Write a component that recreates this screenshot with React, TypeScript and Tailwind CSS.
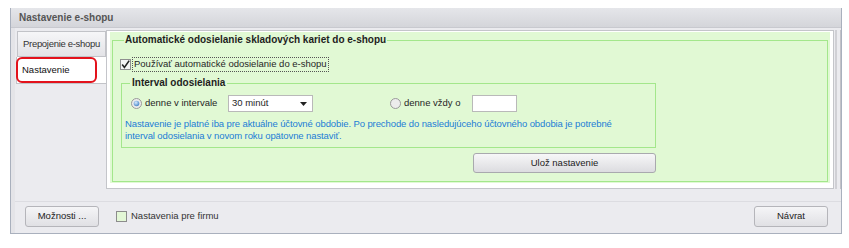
import React from 'react';

const CheckedBox: React.FC = () => (
  <svg width="11" height="11" viewBox="0 0 11 11" className="shrink-0">
    <rect x="0.5" y="0.5" width="10" height="10" fill="#f4f4f4" stroke="#8e8f8f" />
    <path d="M2.2 5.6 L4.4 8.4 L9.2 1.6" fill="none" stroke="#222" strokeWidth="1.6" />
  </svg>
);

const Radio: React.FC<{ checked?: boolean }> = ({ checked }) => (
  <svg width="11" height="11" viewBox="0 0 11 11" className="shrink-0">
    <defs>
      <radialGradient id="rb" cx="0.4" cy="0.35" r="0.7">
        <stop offset="0" stopColor="#d8ecff" />
        <stop offset="1" stopColor="#3f7fc4" />
      </radialGradient>
    </defs>
    <circle cx="5.5" cy="5.5" r="5" fill="#ececec" stroke="#9a9a9a" />
    {checked && <circle cx="5.5" cy="5.5" r="2.8" fill="url(#rb)" />}
  </svg>
);

const App: React.FC = () => {
  return (
    <div
      className="w-[849px] h-[248px] bg-white pt-[8px] pl-[10px] text-[9.5px] text-[#262626]"
      style={{ fontFamily: '"Liberation Sans", Arial, sans-serif' }}
    >
      <div className="w-[832px] h-[226px] flex flex-col bg-[#ebebef] border-l border-r border-b border-[#a9b0bd]">
        <div className="h-[20px] shrink-0 flex items-center pl-[8px] bg-gradient-to-b from-[#e5e6ea] to-[#d4d5da] border-b border-[#c8c9cf]">
          <span className="font-bold text-[10px] text-[#555]">Nastavenie e-shopu</span>
        </div>

        <div className="flex pt-[2px] border-l-[4px] border-[#e4e4e8]">
          <div className="relative w-[90px] ml-[1px] pt-[1px] flex flex-col">
            <div className="ml-[1px] h-[26px] flex items-center pl-[5px] border border-[#c2c3c8] bg-gradient-to-b from-[#f6f6f8] to-[#e3e3e7] text-[#333] whitespace-nowrap tracking-[-0.3px]">
              Prepojenie e-shopu
            </div>
            <div className="h-[27px] flex items-center pl-[5px] bg-white border-l border-b border-[#c2c3c8] text-[#111]">
              Nastavenie
            </div>
            <div className="absolute left-0 top-[27px] w-[81px] h-[26px] border-2 border-[#e3121c] rounded-[6px]" />
          </div>

          <div className="w-[728px] h-[159px] bg-white border border-[#c4c5ca] pt-[1px] px-[3px] pb-[5px]">
            <div className="h-full bg-[#e1f9d4] px-[2px] pt-[2px] pb-[1px]">
              <fieldset className="h-full border border-[#a3e78b] pl-[7px]">
                <legend className="ml-[4px] px-[1px] font-bold text-[10px] leading-[12px] text-[#1e1e1e]">
                  Automatické odosielanie skladových kariet do e-shopu
                </legend>

                <div className="mt-[11px] h-[15px] flex items-center">
                  <CheckedBox />
                  <span className="ml-[1px] h-[15px] flex items-center px-[1px] border border-dotted border-[#555]">
                    Používať automatické odosielanie do e-shopu
                  </span>
                </div>

                <fieldset className="mt-[5px] ml-[1px] w-[535px] border border-[#a3e78b] pb-[5px]">
                  <legend className="ml-[8px] px-[2px] font-bold text-[10px] leading-[12px] text-[#1e1e1e]">
                    Interval odosielania
                  </legend>
                  <div className="mt-[6px] h-[17px] flex items-center pl-[9px]">
                    <Radio checked />
                    <span className="ml-[3px] w-[83px]">denne v intervale</span>
                    <div className="w-[85px] h-[17px] bg-white border border-[#b9b9b9] flex items-center justify-between pl-[3px] pr-[5px]">
                      <span>30 minút</span>
                      <svg width="7" height="4" viewBox="0 0 7 4">
                        <path d="M0 0 H7 L3.5 4 Z" fill="#222" />
                      </svg>
                    </div>
                    <div className="ml-[77px] flex items-center">
                      <Radio />
                      <span className="ml-[3px] w-[68px]">denne vždy o</span>
                    </div>
                    <div className="w-[45px] h-[17px] bg-white border border-[#b9b9b9]" />
                  </div>
                  <p className="mt-[6px] pl-[3px] leading-[12px] text-[#1c7dd6] tracking-[-0.1px]">
                    Nastavenie je platné iba pre aktuálne účtovné obdobie. Po prechode do nasledujúceho účtovného obdobia je potrebné
                    <br />
                    interval odosielania v novom roku opätovne nastaviť.
                  </p>
                </fieldset>

                <div className="mt-[5px] ml-[353px] w-[183px] h-[20px] flex items-center justify-center rounded-[3px] border border-[#a9a9ae] bg-gradient-to-b from-[#f7f7f8] to-[#dcdce0] text-[#222]">
                  Ulož nastavenie
                </div>
              </fieldset>
            </div>
          </div>

          <div className="w-[7px] flex">
            <div className="ml-[1px] w-[2px] bg-[#d0d0d5]" />
            <div className="ml-[3px] w-[1px] bg-[#c2c2c8]" />
          </div>
        </div>

        <div className="flex-1 flex items-end pb-[6px] border-l-[4px] border-[#e4e4e8]">
          <div className="w-full border-t border-[#dcdce1] pt-[4px] pl-[10px] pr-[13px] flex items-center">
            <div className="w-[74px] h-[21px] flex items-center justify-center rounded-[3px] border border-[#b5b5ba] bg-gradient-to-b from-[#f5f5f7] to-[#e0e0e4] text-[#222]">
              Možnosti ...
            </div>
            <div className="ml-[17px] w-[11px] h-[11px] bg-[#e3f7d6] border border-[#8c8c8c]" />
            <span className="ml-[4px] text-[#333]">Nastavenia pre firmu</span>
            <div className="ml-auto w-[74px] h-[21px] flex items-center justify-center rounded-[3px] border border-[#b5b5ba] bg-gradient-to-b from-[#f5f5f7] to-[#e0e0e4] text-[#222]">
              Návrat
            </div>
          </div>
        </div>
      </div>
    </div>
  );
};

export default App;
